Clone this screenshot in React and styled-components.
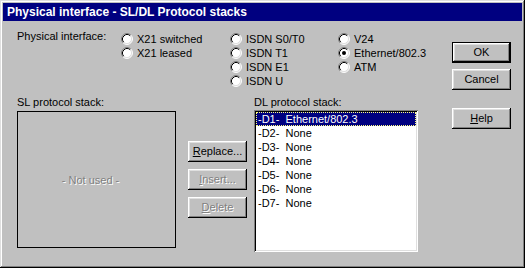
import React from 'react'
import styled, { createGlobalStyle } from 'styled-components'

const GlobalStyle = createGlobalStyle`
  body {
    margin: 0;
    background: #c0c0c0;
  }
  * {
    box-sizing: border-box;
  }
`

const Window = styled.div`
  width: 525px;
  height: 268px;
  padding: 3px;
  background: #c0c0c0;
  box-shadow: inset -1px -1px #000, inset 1px 1px #dfdfdf,
    inset -2px -2px #808080, inset 2px 2px #fff;
  font-family: "Liberation Sans", Arial, sans-serif;
  font-size: 11px;
  color: #000;
  display: flex;
  flex-direction: column;
`

const TitleBar = styled.div`
  height: 18px;
  flex: none;
  background: #000080;
  color: #fff;
  font-size: 12px;
  font-weight: bold;
  display: flex;
  align-items: center;
  padding-left: 4px;
`

const Body = styled.div`
  flex: 1;
  display: flex;
  padding: 0 11px 0 14px;
`

const Main = styled.div`
  flex: 1;
  padding-top: 8px;
  display: flex;
  flex-direction: column;
`

const Side = styled.div`
  width: 59px;
  padding-top: 21px;
  display: flex;
  flex-direction: column;
`

const TopRow = styled.div`
  display: flex;
  align-items: flex-start;
`

const Label = styled.div`
  line-height: 14px;
  height: 14px;
  white-space: nowrap;
`

const InterfaceLabel = styled(Label)`
  width: 104px;
`

const RadioColumn = styled.div`
  width: ${(p) => p.$width}px;
  margin-top: 3px;
  display: flex;
  flex-direction: column;
`

const RadioItem = styled.div`
  height: 14px;
  line-height: 14px;
  display: flex;
  align-items: center;
  gap: 4px;
  white-space: nowrap;
`

const BottomRow = styled.div`
  margin-top: 7px;
  display: flex;
  align-items: flex-start;
`

const StackColumn = styled.div`
  display: flex;
  flex-direction: column;
`

const SlBox = styled.div`
  margin-top: 2px;
  width: 159px;
  height: 137px;
  border: 1px solid #000;
  display: flex;
  align-items: center;
  justify-content: center;
  padding-right: 12px;
`

const Disabled = styled.span`
  color: #808080;
  text-shadow: 1px 1px #fff;
  line-height: 14px;
`

const ButtonColumn = styled.div`
  margin: 0 7px 0 12px;
  padding-top: 46px;
  display: flex;
  flex-direction: column;
  gap: 7px;
`

const Button = styled.div`
  width: 59px;
  height: 21px;
  display: flex;
  align-items: center;
  justify-content: center;
  background: #c0c0c0;
  border: ${(p) => (p.$default ? '1px solid #000' : 'none')};
  box-shadow: inset -1px -1px #000, inset 1px 1px #fff,
    inset -2px -2px #808080, inset 2px 2px #dfdfdf;
  color: ${(p) => (p.$disabled ? '#808080' : '#000')};
  text-shadow: ${(p) => (p.$disabled ? '1px 1px #fff' : 'none')};
  margin-top: ${(p) => p.$gap || 0}px;
  padding-bottom: 1px;
`

const ListBox = styled.div`
  margin-top: 1px;
  width: 164px;
  height: 142px;
  background: #fff;
  padding: 2px;
  box-shadow: inset 1px 1px #808080, inset -1px -1px #fff,
    inset 2px 2px #000, inset -2px -2px #dfdfdf;
`

const ListItem = styled.div`
  height: 14px;
  line-height: 14px;
  padding-left: 2px;
  white-space: pre;
  background: ${(p) => (p.$selected ? '#000080' : 'transparent')};
  color: ${(p) => (p.$selected ? '#fff' : '#000')};
  outline: ${(p) => (p.$selected ? '1px dotted #ffff80' : 'none')};
  outline-offset: -1px;
`

function Radio({ checked }) {
  return (
    <svg width="12" height="12" viewBox="0 0 12 12" style={{ flex: 'none' }}>
      <circle cx="6" cy="6" r="5" fill="#fff" />
      <path d="M2.11 9.89 A5.5 5.5 0 0 1 9.89 2.11" stroke="#808080" fill="none" />
      <path d="M9.89 2.11 A5.5 5.5 0 0 1 2.11 9.89" stroke="#fff" fill="none" />
      <path d="M2.82 9.18 A4.5 4.5 0 0 1 9.18 2.82" stroke="#000" fill="none" />
      <path d="M9.18 2.82 A4.5 4.5 0 0 1 2.82 9.18" stroke="#dfdfdf" fill="none" />
      {checked && <circle cx="6" cy="6" r="2" fill="#000" />}
    </svg>
  )
}

const interfaces = [
  { width: 109, items: ['X21 switched', 'X21 leased'] },
  { width: 108, items: ['ISDN S0/T0', 'ISDN T1', 'ISDN E1', 'ISDN U'] },
  { width: 100, items: ['V24', 'Ethernet/802.3', 'ATM'] },
]

const dlStack = [
  'Ethernet/802.3',
  'None',
  'None',
  'None',
  'None',
  'None',
  'None',
]

export default function App() {
  return (
    <>
      <GlobalStyle />
      <Window>
        <TitleBar>Physical interface - SL/DL Protocol stacks</TitleBar>
        <Body>
          <Main>
            <TopRow>
              <InterfaceLabel>Physical interface:</InterfaceLabel>
              {interfaces.map((col, i) => (
                <RadioColumn key={i} $width={col.width}>
                  {col.items.map((name) => (
                    <RadioItem key={name}>
                      <Radio checked={name === 'Ethernet/802.3'} />
                      {name}
                    </RadioItem>
                  ))}
                </RadioColumn>
              ))}
            </TopRow>
            <BottomRow>
              <StackColumn>
                <Label>SL protocol stack:</Label>
                <SlBox>
                  <Disabled>- Not used -</Disabled>
                </SlBox>
              </StackColumn>
              <ButtonColumn>
                <Button><span><u>R</u>eplace...</span></Button>
                <Button $disabled><span><u>I</u>nsert...</span></Button>
                <Button $disabled><span><u>D</u>elete</span></Button>
              </ButtonColumn>
              <StackColumn>
                <Label>DL protocol stack:</Label>
                <ListBox>
                  {dlStack.map((v, i) => (
                    <ListItem key={i} $selected={i === 0}>
                      {`-D${i + 1}-  ${v}`}
                    </ListItem>
                  ))}
                </ListBox>
              </StackColumn>
            </BottomRow>
          </Main>
          <Side>
            <Button $default>OK</Button>
            <Button $gap={6}>Cancel</Button>
            <Button $gap={18}><span><u>H</u>elp</span></Button>
          </Side>
        </Body>
      </Window>
    </>
  )
}
